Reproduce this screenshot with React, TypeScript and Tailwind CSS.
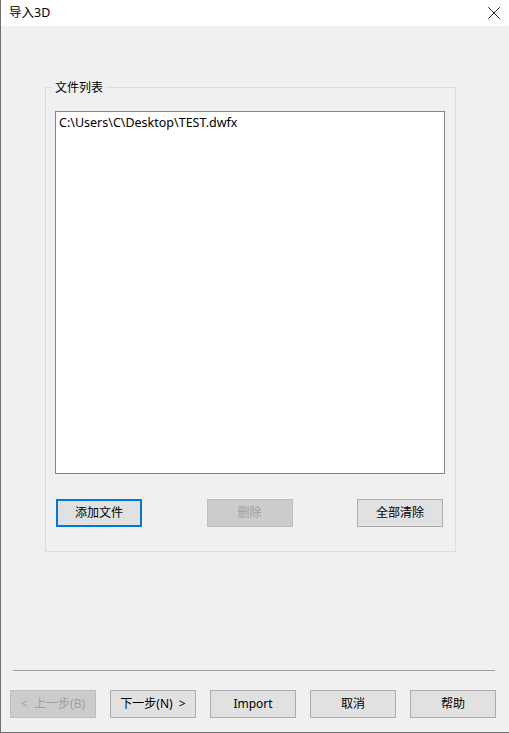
import {X} from "lucide-react";

const font = "font-['Segoe_UI','Noto_Sans','Noto_Sans_CJK_SC',sans-serif]"

function Btn({label, disabled, focused}: {label: string, disabled?: boolean, focused?: boolean}) {
    const look = disabled
        ? 'bg-[#cccccc] border border-[#bfbfbf] text-[#a0a0a0]'
        : focused
            ? 'bg-[#e1e1e1] border-2 border-[#0078d7] text-black'
            : 'bg-[#e1e1e1] border border-[#adadad] text-black'
    return (
        <div className={`w-[86px] h-[28px] flex items-center justify-center text-[12px] whitespace-pre ${look}`}>
            {label}
        </div>
    )
}

export default function App() {
    return (
        <div className={`w-[509px] h-[733px] flex flex-col bg-[#f0f0f0] border-l border-b border-[#707070] ${font}`}>
            <div className="h-[26px] bg-white flex items-center justify-between pl-[8px] pr-[4px]">
                <span className="text-[12.5px] text-black">导入3D</span>
                <X size={22} strokeWidth={0.9} className="text-black"/>
            </div>

            <div className="flex-1 flex flex-col">
                <div className="relative ml-[44px] mt-[61px] w-[411px] h-[465px] border border-[#dcdcdc] pt-[23px] pl-[9px]">
                    <span className="absolute left-[6px] -top-[8px] px-[3px] bg-[#f0f0f0] text-[12px] text-black leading-[16px]">文件列表</span>
                    <div className="w-[390px] h-[363px] bg-white border border-[#828790] pl-[3px] pt-[3px] text-[12.5px] text-black leading-[16px]">
                        C:\Users\C\Desktop\TEST.dwfx
                    </div>
                    <div className="mt-[25px] ml-[1px] w-[387px] flex justify-between">
                        <Btn label="添加文件" focused/>
                        <Btn label="删除" disabled/>
                        <Btn label="全部清除"/>
                    </div>
                </div>

                <div className="flex-1"/>

                <div className="ml-[12px] w-[482px] h-px bg-[#a0a0a0]"/>

                <div className="ml-[9px] mt-[19px] mb-[14px] flex gap-[14px]">
                    <Btn label="<  上一步(B)" disabled/>
                    <Btn label="下一步(N)  >"/>
                    <Btn label="Import"/>
                    <Btn label="取消"/>
                    <Btn label="帮助"/>
                </div>
            </div>
        </div>
    )
}
